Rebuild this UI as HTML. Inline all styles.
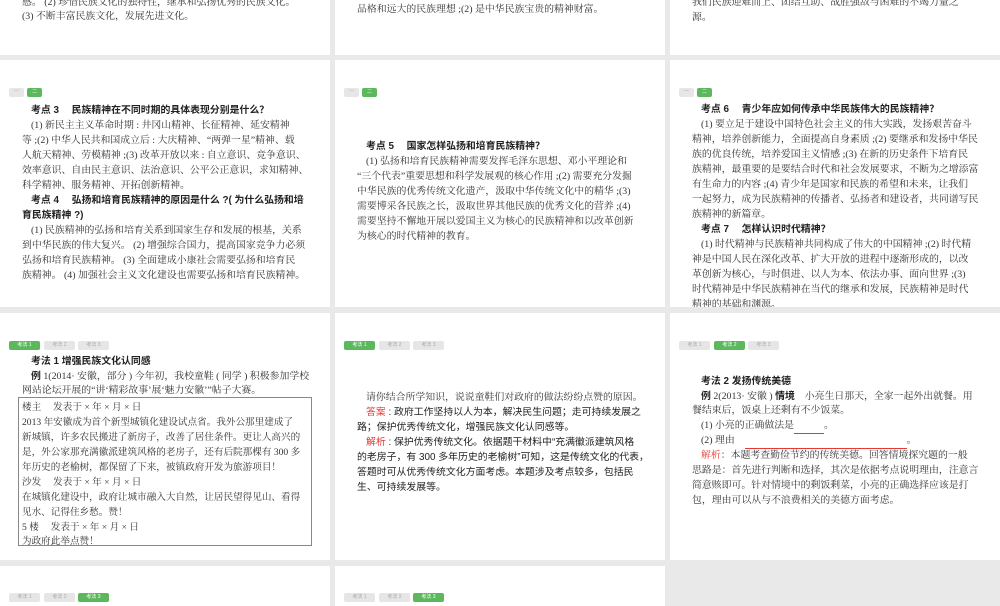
<!DOCTYPE html>
<html><head><meta charset="utf-8"><style>
*{margin:0;padding:0;box-sizing:border-box}
body{width:1000px;height:600px;background:#e9e9e9;position:relative;overflow:hidden;font-family:"Liberation Serif","Noto Serif CJK SC",serif;color:#333;font-size:9.9px}
.p{position:absolute;background:#fff;overflow:hidden}
.l{position:absolute;white-space:nowrap;line-height:14px}
.h{font-family:"Liberation Sans","Noto Sans CJK SC",sans-serif;font-weight:bold;color:#222}
.s{font-family:"Liberation Sans","Noto Sans CJK SC",sans-serif;color:#222}
.t{position:absolute;height:9px;border-radius:2px;background:#e6e6e6;font-size:5px;color:#aaa;text-align:center;line-height:9px;font-family:"Liberation Sans","Noto Sans CJK SC",sans-serif}
.g{background:#5cb85c;color:#fff}
.r{color:#e53935}
.box{position:absolute;border:1px solid #888}
.k{font-size:9.6px}
</style></head><body>
<!-- row0 -->
<div class="p" style="left:0;top:0;width:330px;height:55px">
<div class="l" style="left:22px;top:-4px">感。 (2) 珍惜民族文化的独特性，继承和弘扬优秀的民族文化。</div>
<div class="l" style="left:22px;top:10px">(3) 不断丰富民族文化，发展先进文化。</div>
</div>
<div class="p" style="left:335px;top:0;width:330px;height:55px">
<div class="l" style="left:22px;top:3px">品格和远大的民族理想 ;(2) 是中华民族宝贵的精神财富。</div>
</div>
<div class="p" style="left:670px;top:0;width:330px;height:55px">
<div class="l" style="left:22px;top:-4px">我们民族迎难而上、团结互助、战胜强敌与困难的不竭力量之</div>
<div class="l" style="left:22px;top:11px">源。</div>
</div>
<!-- row1 -->
<div class="p" style="left:0;top:60px;width:330px;height:247px">
<div class="t" style="left:9px;top:28px;width:15px">一</div><div class="t g" style="left:27px;top:28px;width:15px">二</div>
<div class="l h" style="left:31px;top:44px">考点 3　 民族精神在不同时期的具体表现分别是什么？</div>
<div class="l" style="left:31px;top:59px">(1) 新民主主义革命时期 : 井冈山精神、长征精神、延安精神</div>
<div class="l" style="left:22px;top:74px">等 ;(2) 中华人民共和国成立后 : 大庆精神、“两弹一星”精神、载</div>
<div class="l" style="left:22px;top:89px">人航天精神、劳模精神 ;(3) 改革开放以来 : 自立意识、竞争意识、</div>
<div class="l" style="left:22px;top:104px">效率意识、自由民主意识、法治意识、公平公正意识，求知精神、</div>
<div class="l" style="left:22px;top:119px">科学精神、服务精神、开拓创新精神。</div>
<div class="l h" style="left:31px;top:134px">考点 4　 弘扬和培育民族精神的原因是什么 ?( 为什么弘扬和培</div>
<div class="l h" style="left:22px;top:149px">育民族精神 ?)</div>
<div class="l" style="left:31px;top:164px">(1) 民族精神的弘扬和培育关系到国家生存和发展的根基，关系</div>
<div class="l" style="left:22px;top:179px">到中华民族的伟大复兴。 (2) 增强综合国力，提高国家竞争力必须</div>
<div class="l" style="left:22px;top:194px">弘扬和培育民族精神。 (3) 全面建成小康社会需要弘扬和培育民</div>
<div class="l" style="left:22px;top:209px">族精神。 (4) 加强社会主义文化建设也需要弘扬和培育民族精神。</div>
</div>
<div class="p" style="left:335px;top:60px;width:330px;height:247px">
<div class="t" style="left:9px;top:28px;width:15px">一</div><div class="t g" style="left:27px;top:28px;width:15px">二</div>
<div class="l h" style="left:31px;top:80px">考点 5　 国家怎样弘扬和培育民族精神？</div>
<div class="l" style="left:31px;top:95px">(1) 弘扬和培育民族精神需要发挥毛泽东思想、邓小平理论和</div>
<div class="l" style="left:22px;top:110px">“三个代表”重要思想和科学发展观的核心作用 ;(2) 需要充分发掘</div>
<div class="l" style="left:22px;top:125px">中华民族的优秀传统文化遗产，汲取中华传统文化中的精华 ;(3)</div>
<div class="l" style="left:22px;top:140px">需要博采各民族之长，汲取世界其他民族的优秀文化的营养 ;(4)</div>
<div class="l" style="left:22px;top:155px">需要坚持不懈地开展以爱国主义为核心的民族精神和以改革创新</div>
<div class="l" style="left:22px;top:170px">为核心的时代精神的教育。</div>
</div>
<div class="p" style="left:670px;top:60px;width:330px;height:247px">
<div class="t" style="left:9px;top:28px;width:15px">一</div><div class="t g" style="left:27px;top:28px;width:15px">二</div>
<div class="l h" style="left:31px;top:43px">考点 6　 青少年应如何传承中华民族伟大的民族精神？</div>
<div class="l" style="left:31px;top:58px">(1) 要立足于建设中国特色社会主义的伟大实践，发扬艰苦奋斗</div>
<div class="l" style="left:22px;top:73px">精神，培养创新能力，全面提高自身素质 ;(2) 要继承和发扬中华民</div>
<div class="l" style="left:22px;top:88px">族的优良传统，培养爱国主义情感 ;(3) 在新的历史条件下培育民</div>
<div class="l" style="left:22px;top:103px">族精神，最重要的是要结合时代和社会发展要求，不断为之增添富</div>
<div class="l" style="left:22px;top:118px">有生命力的内容 ;(4) 青少年是国家和民族的希望和未来，让我们</div>
<div class="l" style="left:22px;top:133px">一起努力，成为民族精神的传播者、弘扬者和建设者，共同谱写民</div>
<div class="l" style="left:22px;top:148px">族精神的新篇章。</div>
<div class="l h" style="left:31px;top:163px">考点 7　 怎样认识时代精神？</div>
<div class="l" style="left:31px;top:178px">(1) 时代精神与民族精神共同构成了伟大的中国精神 ;(2) 时代精</div>
<div class="l" style="left:22px;top:193px">神是中国人民在深化改革、扩大开放的进程中逐渐形成的，以改</div>
<div class="l" style="left:22px;top:208px">革创新为核心，与时俱进、以人为本、依法办事、面向世界 ;(3)</div>
<div class="l" style="left:22px;top:223px">时代精神是中华民族精神在当代的继承和发展，民族精神是时代</div>
<div class="l" style="left:22px;top:238px">精神的基础和渊源。</div>
</div>
<!-- row2 -->
<div class="p" style="left:0;top:313px;width:330px;height:247px">
<div class="t g" style="left:9px;top:28px;width:31px">考法 1</div><div class="t" style="left:44px;top:28px;width:31px">考法 2</div><div class="t" style="left:78px;top:28px;width:31px">考法 3</div>
<div class="l h" style="left:31px;top:42px">考法 1 增强民族文化认同感</div>
<div class="l" style="left:31px;top:57px"><b class="s">例</b> 1(2014· 安徽，部分 ) 今年初，我校童鞋 ( 同学 ) 积极参加学校</div>
<div class="l" style="left:22px;top:71px">网站论坛开展的“讲‘精彩故事’展‘魅力安徽’”帖子大赛。</div>
<div class="box" style="left:18px;top:84px;width:294px;height:149px"></div>
<div class="l k" style="left:22px;top:88px">楼主　 发表于 × 年 × 月 × 日</div>
<div class="l k" style="left:22px;top:103px">2013 年安徽成为首个新型城镇化建设试点省。我外公那里建成了</div>
<div class="l k" style="left:22px;top:118px">新城镇，许多农民搬进了新房子，改善了居住条件。更让人高兴的</div>
<div class="l k" style="left:22px;top:133px">是，外公家那充满徽派建筑风格的老房子，还有后院那棵有 300 多</div>
<div class="l k" style="left:22px;top:148px">年历史的老榆树，都保留了下来，被镇政府开发为旅游项目！</div>
<div class="l k" style="left:22px;top:163px">沙发　 发表于 × 年 × 月 × 日</div>
<div class="l k" style="left:22px;top:178px">在城镇化建设中，政府让城市融入大自然，让居民望得见山、看得</div>
<div class="l k" style="left:22px;top:193px">见水、记得住乡愁。赞！</div>
<div class="l k" style="left:22px;top:208px">5 楼　 发表于 × 年 × 月 × 日</div>
<div class="l k" style="left:22px;top:222px">为政府此举点赞！</div>
</div>
<div class="p" style="left:335px;top:313px;width:330px;height:247px">
<div class="t g" style="left:9px;top:28px;width:31px">考法 1</div><div class="t" style="left:44px;top:28px;width:31px">考法 2</div><div class="t" style="left:78px;top:28px;width:31px">考法 3</div>
<div class="l" style="left:31px;top:78px">请你结合所学知识，说说童鞋们对政府的做法纷纷点赞的原因。</div>
<div class="l s" style="left:31px;top:93px"><span class="r">答案</span> : 政府工作坚持以人为本，解决民生问题；走可持续发展之</div>
<div class="l s" style="left:22px;top:108px">路；保护优秀传统文化，增强民族文化认同感等。</div>
<div class="l s" style="left:31px;top:123px"><span class="r">解析</span> : 保护优秀传统文化。依据题干材料中“充满徽派建筑风格</div>
<div class="l s" style="left:22px;top:138px">的老房子，有 300 多年历史的老榆树”可知，这是传统文化的代表，</div>
<div class="l s" style="left:22px;top:153px">答题时可从优秀传统文化方面考虑。本题涉及考点较多，包括民</div>
<div class="l s" style="left:22px;top:168px">生、可持续发展等。</div>
</div>
<div class="p" style="left:670px;top:313px;width:330px;height:247px">
<div class="t" style="left:9px;top:28px;width:31px">考法 1</div><div class="t g" style="left:44px;top:28px;width:31px">考法 2</div><div class="t" style="left:78px;top:28px;width:31px">考法 3</div>
<div class="l h" style="left:31px;top:62px">考法 2 发扬传统美德</div>
<div class="l" style="left:31px;top:77px"><b class="s">例</b> 2(2013· 安徽 ) <b class="s">情境</b>　小亮生日那天，全家一起外出就餐。用</div>
<div class="l" style="left:22px;top:91px">餐结束后，饭桌上还剩有不少饭菜。</div>
<div class="l" style="left:31px;top:106px">(1) 小亮的正确做法是<span style="border-bottom:1px solid #e53935;display:inline-block;width:30px">&nbsp;</span>。</div>
<div class="l" style="left:31px;top:121px">(2) 理由　<span style="border-bottom:1px solid #e53935;display:inline-block;width:162px">&nbsp;</span>。</div>
<div class="l" style="left:31px;top:136px"><span class="r">解析</span>：本题考查勤俭节约的传统美德。回答情境探究题的一般</div>
<div class="l" style="left:22px;top:151px">思路是：首先进行判断和选择，其次是依据考点说明理由，注意言</div>
<div class="l" style="left:22px;top:166px">简意赅即可。针对情境中的剩饭剩菜，小亮的正确选择应该是打</div>
<div class="l" style="left:22px;top:181px">包，理由可以从与不浪费相关的美德方面考虑。</div>
</div>
<!-- row3 -->
<div class="p" style="left:0;top:566px;width:330px;height:40px">
<div class="t" style="left:9px;top:27px;width:31px">考法 1</div><div class="t" style="left:44px;top:27px;width:31px">考法 2</div><div class="t g" style="left:78px;top:27px;width:31px">考法 3</div>
</div>
<div class="p" style="left:335px;top:566px;width:330px;height:40px">
<div class="t" style="left:9px;top:27px;width:31px">考法 1</div><div class="t" style="left:44px;top:27px;width:31px">考法 2</div><div class="t g" style="left:78px;top:27px;width:31px">考法 3</div>
</div>
</body></html>
